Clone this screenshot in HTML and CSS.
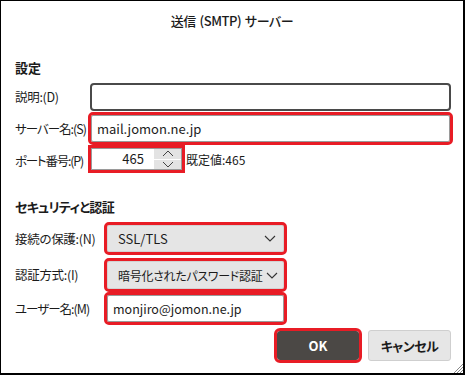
FILE: index.html
```html
<!DOCTYPE html>
<html lang="ja">
<head>
<meta charset="utf-8">
<link rel="stylesheet" href="styles.css">
</head>
<body>
<div class="dialog">
  <div class="title">送信 (SMTP) サーバー</div>
  <div class="body">
    <div class="heading h1">設定</div>
    <div class="grid g1">
      <label class="lbl">説明:(D)</label>
      <div class="field desc"></div>

      <label class="lbl kana r2">サーバー名:(S)</label>
      <div class="field server mark r2">mail.jomon.ne.jp</div>

      <label class="lbl kana r3 lbl-port">ポート番号:(P)</label>
      <div class="port-row r3">
        <div class="port mark">
          <span class="port-val">465</span>
          <span class="spin">
            <span class="spin-btn"><svg width="12" height="7" viewBox="0 0 12 7"><path d="M1 6 L6 1 L11 6" fill="none" stroke="#444" stroke-width="1"/></svg></span>
            <span class="spin-btn"><svg width="12" height="7" viewBox="0 0 12 7"><path d="M1 1 L6 6 L11 1" fill="none" stroke="#444" stroke-width="1"/></svg></span>
          </span>
        </div>
        <span class="default">既定値:465</span>
      </div>
    </div>

    <div class="heading h2 kana-head">セキュリティと認証</div>
    <div class="grid g2">
      <label class="lbl">接続の保護:(N)</label>
      <div class="select mark sel1"><span>SSL/TLS</span>
        <svg class="chev" width="12" height="7" viewBox="0 0 12 7"><path d="M1 1 L6 6 L11 1" fill="none" stroke="#333" stroke-width="1.1"/></svg>
      </div>

      <label class="lbl s2">認証方式:(I)</label>
      <div class="select mark sel2 s2"><span>暗号化されたパスワード認証</span>
        <svg class="chev" width="12" height="7" viewBox="0 0 12 7"><path d="M1 1 L6 6 L11 1" fill="none" stroke="#333" stroke-width="1.1"/></svg>
      </div>

      <label class="lbl kana s3">ユーザー名:(M)</label>
      <div class="field user mark s3">monjiro@jomon.ne.jp</div>
    </div>

    <div class="buttons">
      <div class="btn ok mark">OK</div>
      <div class="btn cancel">キャンセル</div>
    </div>
  </div>
  <svg class="grip" width="10" height="10" viewBox="0 0 10 10">
    <path d="M10 1 L1 10 M10 4 L4 10 M10 7 L7 10" stroke="#888" stroke-width="1"/>
  </svg>
</div>
</body>
</html>
```
FILE: styles.css
```css
* { box-sizing: border-box; }
html, body { margin: 0; padding: 0; background: #fff; }
body {
  font-family: "Noto Sans CJK JP", "Noto Sans", sans-serif;
  font-feature-settings: "palt" 1;
  color: #1b1b1b;
  font-size: 12.5px;
}
.dialog {
  position: relative;
  width: 465px;
  height: 375px;
  border-left: 1px solid #000;
  border-top: 1px solid #000;
  border-right: 2px solid #000;
  border-bottom: 2px solid #000;
  background: #fff;
}
.title {
  height: 38px;
  display: flex;
  align-items: center;
  justify-content: center;
  font-size: 13px;
  font-weight: 500;
  letter-spacing: -0.4px;
  word-spacing: 1px;
}
.body {
  padding: 0 12px 0 14px;
}
.heading {
  font-size: 13px;
  font-weight: 700;
  line-height: 18px;
  height: 18px;
}
.kana-head { letter-spacing: -0.7px; }
.h1 { margin-top: 20px; }
.h2 { margin-top: 28px; }
.grid {
  display: grid;
  align-items: center;
}
.g1 {
  margin-top: 6px;
  grid-template-columns: 75px 1fr;
}
.r2 { margin-top: 4px; }
.r3 { margin-top: 6px; }
.g2 {
  margin-top: 9px;
  grid-template-columns: 91px 178px;
}
.s2 { margin-top: 9px; }
.s3 { margin-top: 6px; }
.lbl {
  line-height: 16px;
  white-space: nowrap;
  letter-spacing: -0.3px;
}
.kana { letter-spacing: -1px; }
.lbl-port { position: relative; top: 2px; letter-spacing: -1.2px; }
.mark { outline: 3px solid #e81c25; }
.field {
  display: flex;
  align-items: center;
  background: #fff;
  border: 1px solid #9a9a9a;
  border-radius: 2px;
  padding-left: 5px;
  white-space: nowrap;
  font-size: 13px;
}
.desc {
  height: 28px;
  border: 2px solid #4a4a4a;
  border-radius: 4px;
}
.server { height: 27px; margin-left: 1px; margin-right: 1px; }
.port-row {
  display: flex;
  align-items: center;
  gap: 4px;
  height: 22px;
}
.port {
  width: 91px;
  height: 22px;
  margin-left: 1px;
  border: 1px solid #9a9a9a;
  display: flex;
  align-items: stretch;
  background: #fff;
  font-size: 13px;
}
.port-val {
  flex: 1;
  text-align: right;
  padding-right: 10px;
  line-height: 20px;
}
.spin {
  width: 27px;
  display: flex;
  flex-direction: column;
  gap: 1px;
}
.spin-btn {
  flex: 1;
  background: #e3e3e3;
  display: flex;
  align-items: center;
  justify-content: center;
}
.default { white-space: nowrap; font-size: 12px; }
.select {
  height: 27px;
  margin-left: 1px;
  background: #e5e5e5;
  border: 1px solid #d2d2d2;
  border-radius: 2px;
  display: flex;
  align-items: center;
  justify-content: space-between;
  padding: 0 7px 0 10px;
  white-space: nowrap;
}
.sel1 { font-size: 13px; }
.sel2 { height: 28px; font-size: 12px; letter-spacing: -0.3px; }
.chev { flex: none; margin-left: 4px; }
.user {
  margin-left: 1px;
  height: 27px;
  padding-left: 5px;
  font-size: 12.5px;
}
.buttons {
  display: flex;
  justify-content: flex-end;
  gap: 9px;
  margin-top: 8px;
}
.btn {
  width: 83px;
  height: 31px;
  display: flex;
  align-items: center;
  justify-content: center;
  font-weight: 700;
  border-radius: 3px;
  font-size: 13px;
}
.ok {
  background: #4b4845;
  color: #fff;
  width: 82px;
  margin-top: 1px;
  height: 29px;
}
.cancel {
  background: #e6e6e6;
  border: 1px solid #cfcfcf;
  color: #1b1b1b;
  letter-spacing: -0.5px;
}
.grip {
  position: absolute;
  right: 0;
  bottom: 0;
}
```
